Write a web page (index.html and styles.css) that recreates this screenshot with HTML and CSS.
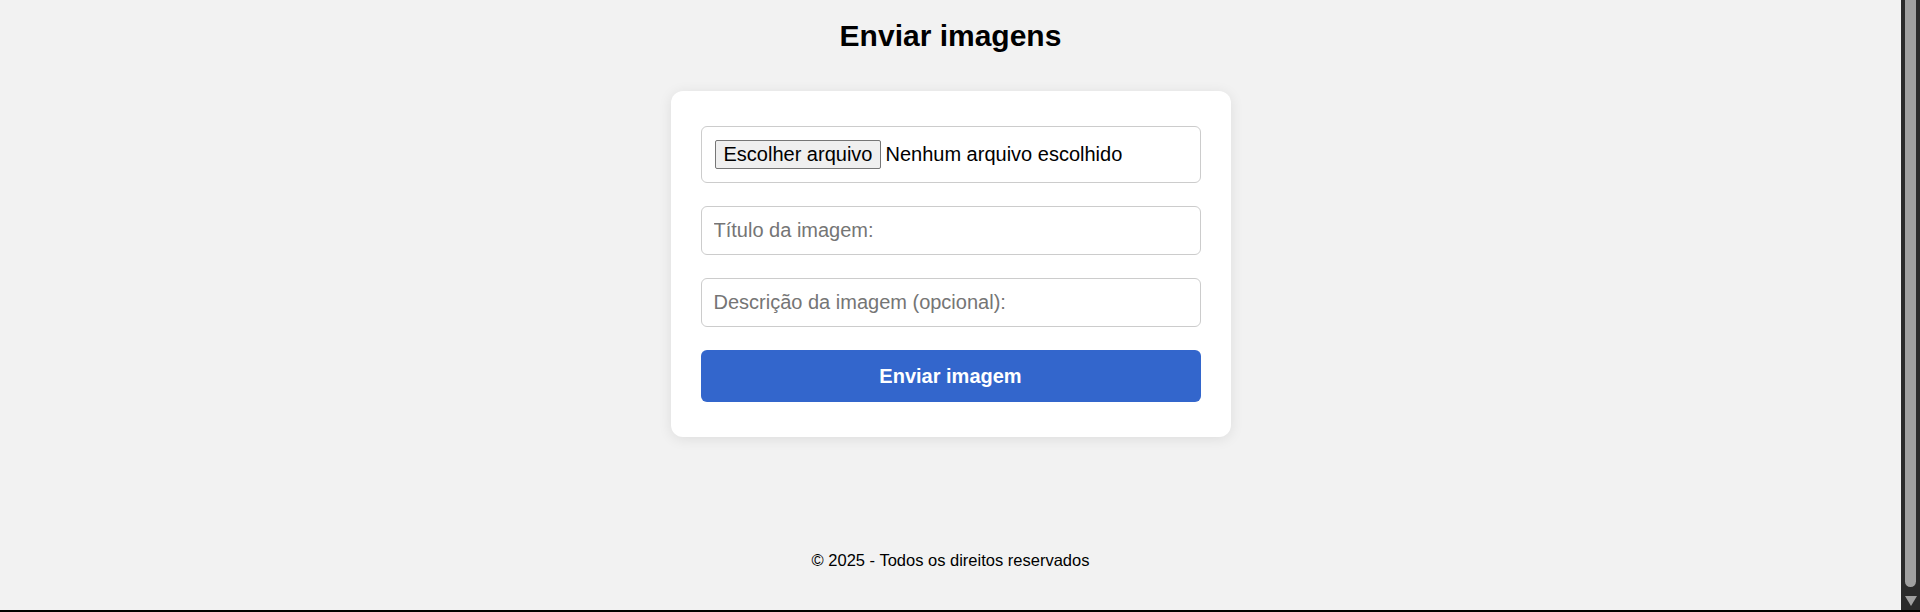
FILE: index.html
```html
<!DOCTYPE html>
<html lang="pt-BR">
<head>
<meta charset="utf-8">
<title>Enviar imagens</title>
<link rel="stylesheet" href="styles.css">
</head>
<body>
<div class="viewport">
  <div class="page">
    <h1 class="title">Enviar imagens</h1>
    <form class="card">
      <div class="file-field">
        <button type="button" class="file-btn">Escolher arquivo</button>
        <span class="file-name">Nenhum arquivo escolhido</span>
      </div>
      <input class="text-field" type="text" placeholder="Título da imagem:">
      <input class="text-field" type="text" placeholder="Descrição da imagem (opcional):">
      <button type="button" class="submit">Enviar imagem</button>
    </form>
    <footer class="footer">© 2025 - Todos os direitos reservados</footer>
  </div>
  <div class="scrollbar">
    <div class="thumb"></div>
    <div class="arrow"></div>
  </div>
</div>
<div class="bottom-line"></div>
</body>
</html>
```
FILE: styles.css
```css
html, body {
  margin: 0;
  padding: 0;
  height: 612px;
  overflow: hidden;
}
body {
  display: flex;
  flex-direction: column;
  background: #f2f2f2;
  font-family: "Liberation Sans", Arial, sans-serif;
  color: #000;
}
.viewport {
  display: flex;
  height: 610px;
}
.page {
  flex: 1;
  display: flex;
  flex-direction: column;
  align-items: center;
}
.title {
  margin: 19px 0 0;
  font-size: 30px;
  line-height: 34px;
  font-weight: bold;
}
.card {
  margin-top: 38px;
  width: 500px;
  padding: 35px 30px 35px;
  background: #fff;
  border-radius: 12px;
  box-shadow: 0 2px 14px rgba(0, 0, 0, 0.09);
  display: flex;
  flex-direction: column;
  gap: 23px;
}
.file-field {
  display: flex;
  align-items: center;
  padding: 13px;
  border: 1px solid #ccc;
  border-radius: 6px;
  height: 29px;
}
.file-btn {
  font-family: "Liberation Sans", Arial, sans-serif;
  font-size: 20px;
  line-height: 23px;
  height: 29px;
  padding: 2px 8px;
  margin: 0 4px 0 0;
  background: #efefef;
  border: 1px solid #767676;
  border-radius: 2px;
  color: #000;
}
.file-name {
  font-size: 20px;
  line-height: 23px;
}
.text-field {
  font-family: "Liberation Sans", Arial, sans-serif;
  font-size: 20px;
  line-height: 23px;
  height: 23px;
  padding: 12px;
  border: 1px solid #ccc;
  border-radius: 6px;
  outline: none;
  background: #fff;
}
.text-field::placeholder {
  color: #757575;
}
.submit {
  font-family: "Liberation Sans", Arial, sans-serif;
  font-size: 20px;
  font-weight: bold;
  line-height: 24px;
  padding: 14px;
  border: none;
  border-radius: 6px;
  background: #3366cc;
  color: #fff;
}
.footer {
  margin-top: 114px;
  font-size: 16.5px;
  line-height: 19px;
}
.scrollbar {
  width: 19px;
  background: #2b2b2b;
  display: flex;
  flex-direction: column;
  align-items: center;
}
.thumb {
  width: 11px;
  height: 587px;
  background: #a0a0a0;
  border-radius: 0 0 6px 6px;
}
.arrow {
  margin-top: 9px;
  width: 0;
  height: 0;
  border-left: 6px solid transparent;
  border-right: 6px solid transparent;
  border-top: 10px solid #a0a0a0;
}
.bottom-line {
  height: 2px;
  background: #000;
}
```
